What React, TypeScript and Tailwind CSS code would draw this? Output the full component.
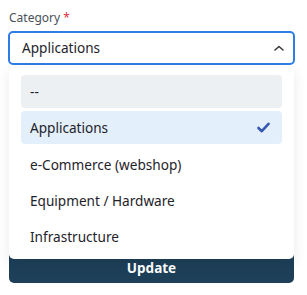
import { useState } from "react";

const options = ["--", "Applications", "e-Commerce (webshop)", "Equipment / Hardware", "Infrastructure"];

const ChevronUp = () => (
  <svg width="10" height="6" viewBox="0 0 10 6" fill="none">
    <path d="M1 5L5 1.5L9 5" stroke="#343a40" strokeWidth="1.6" strokeLinecap="round" strokeLinejoin="round" />
  </svg>
);

const Check = () => (
  <svg width="13" height="11" viewBox="0 0 13 11" fill="none">
    <path d="M1.5 6L4.8 9.2L11.5 1.8" stroke="#3559b0" strokeWidth="2.6" strokeLinecap="round" strokeLinejoin="round" />
  </svg>
);

export default function App() {
  const [selected] = useState("Applications");

  return (
    <div className="w-[307px] h-[295px] bg-white px-[8px] pt-[9px] font-['Noto_Sans',sans-serif]">
      <div className="relative">
        <label className="block text-[12px] leading-[18px] text-[#495057] pl-[1px]">
          Category <span className="text-[#dc3545]">*</span>
        </label>

        {/* Select */}
        <div className="mt-[4px] h-[34px] w-[287px] border-2 border-[#2e7de4] rounded-[5px] flex items-center justify-between pl-[12px] pr-[9px]">
          <span className="text-[13.6px] text-[#1e2329] pt-[1px]">{selected}</span>
          <ChevronUp />
        </div>

        {/* Dropdown menu */}
        <div className="absolute left-[1px] top-[59px] z-10 w-[285px] bg-white rounded-[5px] shadow-[0_4px_14px_rgba(0,0,0,0.09)] px-[12px] py-[7px] flex flex-col gap-[3px]">
          {options.map((opt, i) => {
            const active = opt === selected;
            const dim = opt === "--";
            return (
              <div
                key={opt}
                className={
                  "h-[33px] rounded-[4px] flex items-center justify-between pl-[9px] pr-[12px] text-[13.6px] text-[#1e2329] " +
                  (active ? "bg-[#e4effc]" : dim ? "bg-[#edf0f3]" : "")
                }
              >
                <span className={i > 1 ? "pt-[4px]" : "pt-[2px]"}>{opt}</span>
                {active && <Check />}
              </div>
            );
          })}
        </div>

        <div className="h-[185px]" />

        <button className="w-[285px] ml-[1px] h-[33px] rounded-[5px] bg-[#1d3f58] text-white font-bold text-[13.5px] pt-[4px]">
          Update
        </button>
      </div>
    </div>
  );
}
